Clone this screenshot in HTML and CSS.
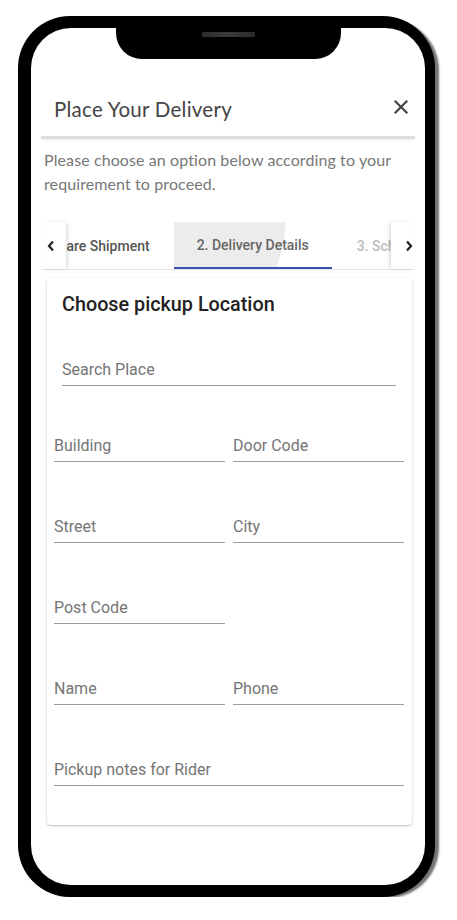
FILE: index.html
```html
<!DOCTYPE html>
<html lang="en">
<head>
<meta charset="utf-8">
<title>Place Your Delivery</title>
<link rel="stylesheet" href="styles.css">
</head>
<body>
<div class="phone">
  <div class="screen">
    <div class="notch"><span class="speaker"></span></div>
    <div class="content">
      <div class="dlg-header">
        <h1 class="dlg-title">Place Your Delivery</h1>
        <button class="close-btn" aria-label="Close">
          <svg width="14" height="14" viewBox="0 0 14 14"><path d="M1.5 1.5L12.5 12.5M12.5 1.5L1.5 12.5" stroke="#444" stroke-width="2.2" stroke-linecap="square"/></svg>
        </button>
      </div>
      <div class="divider"></div>
      <p class="intro">Please choose an option below according to your requirement to proceed.</p>

      <div class="tabs">
        <button class="tab-arrow left" aria-label="Previous">
          <svg width="8" height="12" viewBox="0 0 8 12"><path d="M6 1.5L2 6L6 10.5" fill="none" stroke="#222" stroke-width="2.2"/></svg>
        </button>
        <div class="tab-scroller">
          <div class="tab-strip">
            <div class="tab">1. Prepare Shipment</div>
            <div class="tab active">2. Delivery Details</div>
            <div class="tab disabled">3. Schedule</div>
          </div>
        </div>
        <button class="tab-arrow right" aria-label="Next">
          <svg width="8" height="12" viewBox="0 0 8 12"><path d="M2 1.5L6 6L2 10.5" fill="none" stroke="#222" stroke-width="2.2"/></svg>
        </button>
      </div>

      <div class="card">
        <h2 class="card-title">Choose pickup Location</h2>
        <div class="field search"><span class="label">Search Place</span></div>
        <div class="grid">
          <div class="field"><span class="label">Building</span></div>
          <div class="field"><span class="label">Door Code</span></div>
          <div class="field"><span class="label">Street</span></div>
          <div class="field"><span class="label">City</span></div>
          <div class="field"><span class="label">Post Code</span></div>
          <div class="field empty"></div>
          <div class="field"><span class="label">Name</span></div>
          <div class="field"><span class="label">Phone</span></div>
          <div class="field wide"><span class="label">Pickup notes for Rider</span></div>
        </div>
      </div>
    </div>
  </div>
</div>
</body>
</html>
```

FILE: styles.css
```css
* { box-sizing: border-box; }
html, body { margin: 0; padding: 0; background: #fff; }
body { font-family: Roboto, "Liberation Sans", sans-serif; }

.phone {
  margin: 16px 0 0 18px;
  width: 417px;
  height: 881px;
  border: 12px solid #000;
  border-right-width: 10px;
  border-left-width: 13px;
  border-radius: 52px;
  background: #000;
  box-shadow: 5px 2px 2px -1px rgba(0,0,0,0.55);
}
.screen {
  position: relative;
  width: 100%;
  height: 100%;
  background: #fff;
  border-radius: 40px;
  overflow: hidden;
}
.notch {
  position: absolute;
  top: 0;
  left: 85px;
  width: 225px;
  height: 31px;
  background: #000;
  border-radius: 0 0 26px 26px;
  display: flex;
  justify-content: center;
  padding-top: 4px;
}
.speaker {
  width: 53px;
  height: 5px;
  background: linear-gradient(90deg, #2a2a2a, #3a3a3a 50%, #2a2a2a);
  border-radius: 1px;
}
.content {
  padding: 0 10px 0 10px;
}
.dlg-header {
  display: flex;
  align-items: center;
  justify-content: space-between;
  padding: 69px 7px 15px 13px;
}
.dlg-title {
  margin: 0;
  font-family: Lato, "Open Sans", sans-serif;
  font-weight: 400;
  font-size: 20.5px;
  line-height: 24px;
  color: #444;
  letter-spacing: 0.25px;
}
.close-btn {
  border: 0;
  background: none;
  padding: 0;
  width: 14px;
  height: 14px;
  display: flex;
  margin-top: -5px;
}
.divider {
  height: 3px;
  background: #dedede;
  box-shadow: 0 1px 2px rgba(0,0,0,0.08);
}
.intro {
  margin: 9px 0 0 3px;
  font-family: Lato, "Open Sans", sans-serif;
  font-size: 16px;
  line-height: 24px;
  color: #777;
  letter-spacing: 0.1px;
}

.tabs {
  margin-top: 26px;
  height: 48px;
  display: flex;
  border-bottom: 1px solid #e4e4e4;
}
.tab-arrow {
  position: relative;
  z-index: 1;
  border: 0;
  background: #fff;
  padding: 0;
  width: 25px;
  flex: none;
  display: flex;
  align-items: center;
  justify-content: center;
}
.tab-arrow.left { box-shadow: 2px 0 4px -1px rgba(0,0,0,0.18); padding-right: 6px; }
.tab-arrow.right { width: 24px; box-shadow: -2px 0 4px -1px rgba(0,0,0,0.18); padding-left: 11px; }
.tab-scroller {
  flex: 1;
  overflow: hidden;
}
.tab-strip {
  display: flex;
  height: 100%;
  margin-left: -68px;
}
.tab {
  flex: none;
  padding: 0 24px;
  height: 47px;
  display: flex;
  align-items: center;
  font-size: 14px;
  font-weight: 500;
  color: #555;
  white-space: nowrap;
}
.tab.active {
  color: #666;
  padding: 0 23px;
  border-bottom: 2px solid #3f51b5;
  height: 47px;
  background: radial-gradient(circle 118px at -6px 0px, #ececec 99%, rgba(236,236,236,0) 100%);
}
.tab.disabled { color: #bdbdbd; padding-left: 25px; }

.card {
  margin: 8px 3px 0 6px;
  height: 547px;
  background: #fff;
  border-radius: 4px;
  box-shadow: 0 1px 3px rgba(0,0,0,0.2), 0 1px 1px rgba(0,0,0,0.08);
  padding: 15px 8px 0 7px;
}
.card-title {
  margin: 0 0 0 8px;
  font-size: 19.8px;
  font-weight: 500;
  line-height: 24px;
  color: #222;
}
.field {
  height: 26px;
  border-bottom: 1px solid #9e9e9e;
  padding-bottom: 5px;
}
.field .label {
  display: block;
  font-size: 16px;
  line-height: 20px;
  color: #757575;
}
.field.search { margin: 43px 8px 0 8px; }
.field.empty { border-bottom: 0; }
.grid {
  margin-top: 50px;
  display: grid;
  grid-template-columns: 1fr 1fr;
  column-gap: 8px;
  row-gap: 55px;
}
.field.wide { grid-column: 1 / 3; }
```
